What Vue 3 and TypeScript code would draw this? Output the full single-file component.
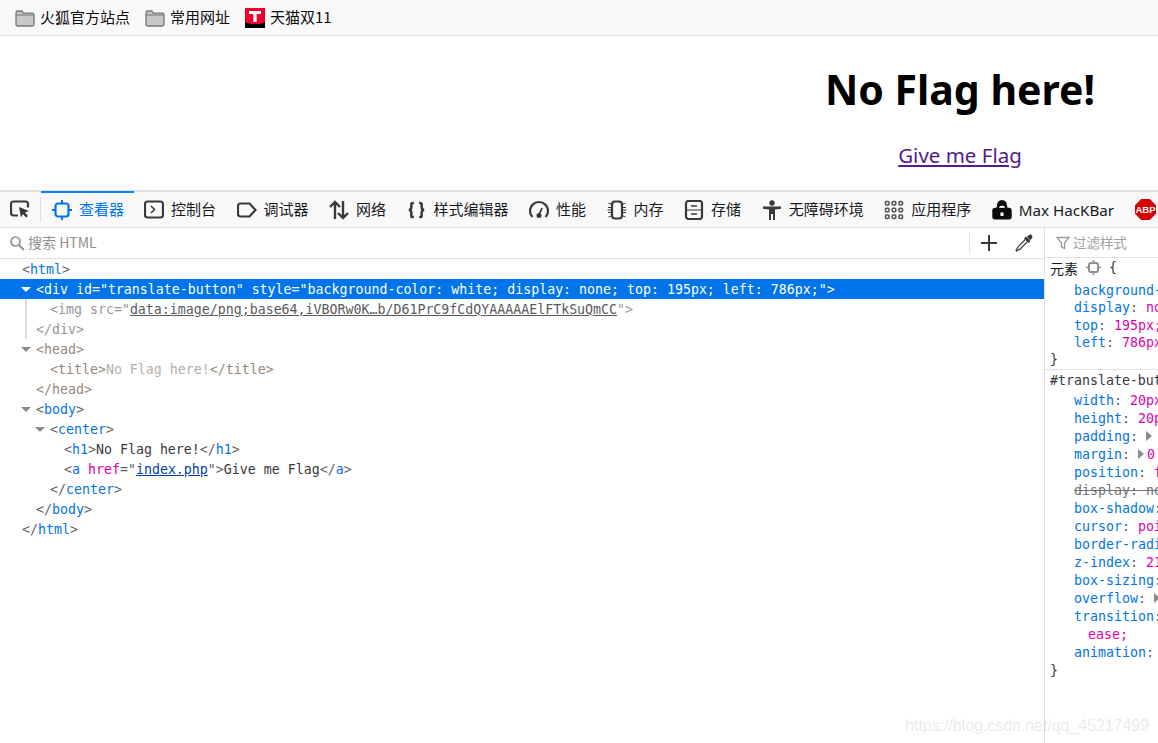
<script setup lang="ts">
type Seg = { t: string; c?: string };
type Row = { level: number; twisty?: boolean; selected?: boolean; guide?: boolean; dim?: boolean; segs: Seg[] };

const b = (t: string): Seg => ({ t, c: 'br' });
const n = (t: string): Seg => ({ t, c: 'tag' });

const rows: Row[] = [
  { level: 0, segs: [b('<'), n('html'), b('>')] },
  { level: 1, twisty: true, selected: true, segs: [{ t: '<div id="translate-button" style="background-color: white; display: none; top: 195px; left: 786px;">' }] },
  { level: 2, guide: true, dim: true, segs: [{ t: '<img src="' }, { t: 'data:image/png;base64,iVBORw0K…b/D61PrC9fCdQYAAAAAElFTkSuQmCC', c: 'link-dim' }, { t: '">' }] },
  { level: 1, guide: true, dim: true, segs: [{ t: '</div>' }] },
  { level: 1, twisty: true, dim: true, segs: [{ t: '<head>', c: 'brown' }] },
  { level: 2, dim: true, segs: [{ t: '<title>', c: 'brown' }, { t: 'No Flag here!', c: 'pale' }, { t: '</title>', c: 'brown' }] },
  { level: 1, dim: true, segs: [{ t: '</head>', c: 'brown' }] },
  { level: 1, twisty: true, segs: [b('<'), n('body'), b('>')] },
  { level: 2, twisty: true, segs: [b('<'), n('center'), b('>')] },
  { level: 3, segs: [b('<'), n('h1'), b('>'), { t: 'No Flag here!' }, b('</'), n('h1'), b('>')] },
  { level: 3, segs: [b('<'), n('a'), { t: ' ' }, { t: 'href', c: 'attr' }, b('="'), { t: 'index.php', c: 'link' }, b('">'), { t: 'Give me Flag' }, b('</'), n('a'), b('>')] },
  { level: 2, segs: [b('</'), n('center'), b('>')] },
  { level: 1, segs: [b('</'), n('body'), b('>')] },
  { level: 0, segs: [b('</'), n('html'), b('>')] },
];

const rule1 = [
  { k: 'background-color', v: 'white;' },
  { k: 'display', v: 'none;' },
  { k: 'top', v: '195px;' },
  { k: 'left', v: '786px;' },
];

type Decl = { k: string; v?: string; arrow?: boolean; off?: boolean; cont?: boolean };
const rule2: Decl[] = [
  { k: 'width', v: '20px;' },
  { k: 'height', v: '20px;' },
  { k: 'padding', arrow: true },
  { k: 'margin', arrow: true, v: '0' },
  { k: 'position', v: 'fixed;' },
  { k: 'display', v: 'none;', off: true },
  { k: 'box-shadow', v: '0;' },
  { k: 'cursor', v: 'pointer;' },
  { k: 'border-radius', v: '0;' },
  { k: 'z-index', v: '2147483647;' },
  { k: 'box-sizing', v: 'border-box;' },
  { k: 'overflow', arrow: true },
  { k: 'transition', v: 'all 0.3s' },
  { k: '', v: 'ease;', cont: true },
  { k: 'animation', v: 'none;' },
];
</script>

<template>
  <div class="window">
    <nav class="bookmarks">
      <a class="bm">
        <svg width="20" height="20" viewBox="0 0 20 20"><path d="M1 5.500C1 4 1.600 3 2.600 3h4.200l1.600 2.200h8.800c1 0 1.800.8 1.800 1.800v9.200c0 1-.8 1.800-1.800 1.800H2.800c-1 0-1.800-.8-1.800-1.800z" fill="#c8c8c8" stroke="#757575" stroke-width="1.300"/><path d="M1.500 7h17" stroke="#757575" stroke-width="1"/></svg>
        <span>火狐官方站点</span>
      </a>
      <a class="bm">
        <svg width="20" height="20" viewBox="0 0 20 20"><path d="M1 5.500C1 4 1.600 3 2.600 3h4.200l1.600 2.200h8.800c1 0 1.800.8 1.800 1.800v9.200c0 1-.8 1.800-1.800 1.800H2.800c-1 0-1.800-.8-1.800-1.800z" fill="#c8c8c8" stroke="#757575" stroke-width="1.300"/><path d="M1.500 7h17" stroke="#757575" stroke-width="1"/></svg>
        <span>常用网址</span>
      </a>
      <a class="bm">
        <svg width="20" height="20" viewBox="0 0 20 20"><rect width="20" height="20" fill="#000"/><path d="M0 0h20v14c-3 1.500-5 2-10 2s-7-.5-10-2z" fill="#f0002a"/><path d="M4 3h12v3h-4.300v8h-3.400v-8H4z" fill="#fff"/></svg>
        <span>天猫双11</span>
      </a>
    </nav>

    <main class="page">
      <h1>No Flag here!</h1>
      <a class="give">Give me Flag</a>
    </main>

    <section class="devtools">
      <header class="toolbar">
        <button class="pick">
          <svg width="20" height="20" viewBox="0 0 20 20" fill="none"><path d="M8 16.500H3.500C2.100 16.500 1 15.400 1 14V5C1 3.600 2.100 2.500 3.500 2.500h12C16.900 2.500 18 3.600 18 5V8.500" stroke="#38383d" stroke-width="2.200"/><path d="M9 8l10 4-4 1.500 3 3.500-2 1.500-3-3.500-2 3.500z" fill="#38383d"/></svg>
        </button>
        <div class="tab active">
          <svg width="20" height="20" viewBox="0 0 20 20" fill="none"><rect x="3.500" y="3.500" width="13" height="13" rx="2.500" stroke="#0074e8" stroke-width="2.200"/><path d="M10 0v3M10 17v3M0 10h3M17 10h3" stroke="#0074e8" stroke-width="2"/></svg>
          <span>查看器</span>
        </div>
        <div class="tab">
          <svg width="20" height="20" viewBox="0 0 20 20" fill="none"><rect x="1" y="1.500" width="18" height="16" rx="2.500" stroke="#38383d" stroke-width="2.200"/><path d="M7 6l3.500 3.500L7 13" stroke="#38383d" stroke-width="1.500"/></svg>
          <span>控制台</span>
        </div>
        <div class="tab">
          <svg width="20" height="20" viewBox="0 0 20 20" fill="none"><path d="M3.500 3.500h9l6 6.500-6 6.500h-9C2.100 16.500 1 15.400 1 14V6c0-1.400 1.100-2.500 2.500-2.500z" stroke="#38383d" stroke-width="2.200"/></svg>
          <span>调试器</span>
        </div>
        <div class="tab">
          <svg width="20" height="20" viewBox="0 0 20 20" fill="none"><path d="M6 19V2M1 7l5-5 5 5M14 1v17M9 13l5 5 5-5" stroke="#38383d" stroke-width="2.400"/></svg>
          <span>网络</span>
        </div>
        <div class="tab">
          <svg width="20" height="20" viewBox="0 0 20 20" fill="none"><path d="M6.800 3H6C5 3 4.300 3.500 4.300 4.600v3.200c0 1.100-.7 1.900-2.300 2.200 1.600.3 2.300 1.100 2.300 2.200v3.200c0 1.100.7 1.600 1.700 1.600h.8M12.200 3H13c1 0 1.700.5 1.700 1.600v3.200c0 1.100.7 1.900 2.300 2.200-1.600.3-2.300 1.100-2.300 2.200v3.200c0 1.100-.7 1.600-1.700 1.600h-.8" stroke="#38383d" stroke-width="2.500"/></svg>
          <span>样式编辑器</span>
        </div>
        <div class="tab">
          <svg width="20" height="20" viewBox="0 0 20 20" fill="none"><path d="M3.500 17C1.800 15.300 1 13.200 1 11a9 9 0 0 1 18 0c0 2.200-.8 4.300-2.500 6" stroke="#38383d" stroke-width="2.200"/><circle cx="10" cy="15.500" r="2.500" fill="#38383d"/><path d="M10 15l3-7" stroke="#38383d" stroke-width="1.800"/></svg>
          <span>性能</span>
        </div>
        <div class="tab">
          <svg width="20" height="20" viewBox="0 0 20 20" fill="none"><rect x="5" y="1.500" width="10" height="17" rx="3" stroke="#38383d" stroke-width="2.200"/><path d="M5 4.500L1.500 3M5 7.500H1M5 10H0.500M5 12.500H1M5 15.500L1.500 17M15 4.500L18.500 3M15 7.500h4M15 10h4.500M15 12.500h4M15 15.500L18.500 17" stroke="#38383d" stroke-width="1"/></svg>
          <span>内存</span>
        </div>
        <div class="tab">
          <svg width="20" height="20" viewBox="0 0 20 20" fill="none"><rect x="2" y="1" width="16" height="18" rx="2.500" stroke="#38383d" stroke-width="2.200"/><path d="M2 10h16" stroke="#38383d" stroke-width="1"/><path d="M7 6h6M7 14h6" stroke="#38383d" stroke-width="1.600"/></svg>
          <span>存储</span>
        </div>
        <div class="tab">
          <svg width="20" height="20" viewBox="0 0 20 20" fill="none"><circle cx="10" cy="3" r="2.700" fill="#38383d"/><path d="M1 6.500h18v2.300l-6 .7V20h-2v-6H9v6H7V9.500l-6-.7z" fill="#38383d"/></svg>
          <span>无障碍环境</span>
        </div>
        <div class="tab">
          <svg width="20" height="20" viewBox="0 0 20 20" fill="none" stroke="#555" stroke-width="1.600"><rect x="1.500" y="1.500" width="3.500" height="3.500" rx="1"/><rect x="8.250" y="1.500" width="3.500" height="3.500" rx="1"/><rect x="15" y="1.500" width="3.500" height="3.500" rx="1"/><rect x="1.500" y="8.250" width="3.500" height="3.500" rx="1"/><rect x="8.250" y="8.250" width="3.500" height="3.500" rx="1"/><rect x="15" y="8.250" width="3.500" height="3.500" rx="1"/><rect x="1.500" y="15" width="3.500" height="3.500" rx="1"/><rect x="8.250" y="15" width="3.500" height="3.500" rx="1"/><rect x="15" y="15" width="3.500" height="3.500" rx="1"/></svg>
          <span>应用程序</span>
        </div>
        <div class="tab">
          <svg width="20" height="20" viewBox="0 0 20 20"><path d="M10 0c3 0 4.800 2.200 5 5l.3 2.500 2.700.5c1 .2 1.700 1 1.700 2.200v6.800c0 1.400-1 2.500-2.400 2.500H2.700C1.300 19.500.3 18.400.3 17v-6.800c0-1.200.7-2 1.700-2.200l2.700-.5L5 5c.2-2.800 2-5 5-5z" fill="#0c0c0d"/><path d="M6.800 7.500c.4-1.200 1.600-1.800 3.200-1.800s2.800.6 3.200 1.800c-2 .5-4.400.5-6.400 0z" fill="#fff"/><rect x="8.500" y="12.500" width="3" height="3.500" fill="#fff"/></svg>
          <span class="latin">Max HacKBar</span>
        </div>
        <div class="tab abp">
          <svg width="21" height="21" viewBox="0 0 21 21"><path d="M6.200 0h8.600L21 6.200v8.600L14.800 21H6.200L0 14.800V6.200z" fill="#d80000"/><text x="10.500" y="14" text-anchor="middle" font-family="Liberation Sans, sans-serif" font-weight="700" font-size="9.500" fill="#fff">ABP</text></svg>
        </div>
      </header>

      <div class="panes">
        <div class="markup">
          <div class="search">
            <svg width="16" height="16" viewBox="0 0 16 16" fill="none"><circle cx="6.500" cy="6.500" r="4.500" stroke="#8f8f8f" stroke-width="1.700"/><path d="M10 10l5 5" stroke="#8f8f8f" stroke-width="2"/></svg>
            <span class="ph">搜索 HTML</span>
            <span class="sp"></span>
            <span class="sep"></span>
            <svg class="plus" width="16" height="16" viewBox="0 0 16 16"><path d="M8 0v16M0 8h16" stroke="#38383d" stroke-width="2"/></svg>
            <svg class="drop" width="18" height="18" viewBox="0 0 18 18" fill="none"><path d="M10 3.500l4.500 4.500" stroke="#38383d" stroke-width="2.600"/><path d="M12 3c1.200-1.300 1.900-2.400 3.300-2.400 1.200 0 2.100 1 2.100 2.100C17.400 4.100 16.300 5 15 6.300z" fill="#38383d"/><path d="M10.800 5L3 12.800c-.5.500-.6 1-.7 1.500L1 16.400l.6.600 2.100-1.300c.5-.1 1-.2 1.500-.7L13 7.200" stroke="#38383d" stroke-width="1.200"/></svg>
          </div>
          <div class="tree">
            <div
              v-for="(r, i) in rows"
              :key="i"
              class="row"
              :class="{ selected: r.selected, guide: r.guide, dim: r.dim }"
              :style="{ paddingLeft: 22 + r.level * 14 + 'px' }"
            >
              <i v-if="r.twisty" class="twisty"></i>
              <span v-for="(s, j) in r.segs" :key="j" :class="s.c">{{ s.t }}</span>
            </div>
          </div>
        </div>

        <aside class="rules">
          <div class="filter">
            <svg width="14" height="14" viewBox="0 0 14 14" fill="none"><path d="M1 1.500h12L8.500 7v5.500l-3-1.500V7z" stroke="#999" stroke-width="1.300"/></svg>
            <span>过滤样式</span>
          </div>
          <div class="rule first">
            <div class="sel"><span class="cjk">元素</span><svg width="15" height="15" viewBox="0 0 15 15" fill="none"><rect x="3" y="3" width="9" height="9" rx="2" stroke="#8f8f8f" stroke-width="2"/><path d="M7.500 0v3M7.500 12v3M0 7.500h3M12 7.500h3" stroke="#8f8f8f" stroke-width="1.600"/></svg><span class="brace">{</span></div>
            <div v-for="d in rule1" :key="d.k" class="decl"><span class="k">{{ d.k }}</span><span class="br">: </span><span class="v">{{ d.v }}</span></div>
            <div class="close">}</div>
          </div>
          <div class="rule second">
            <div class="sel mono">#translate-button {</div>
            <div v-for="(d, i) in rule2" :key="i" class="decl" :class="{ off: d.off, cont: d.cont }">
              <span class="k">{{ d.k }}</span><span v-if="d.k" class="br">: </span><i v-if="d.arrow" class="arrow"></i><span class="v">{{ d.v }}</span>
            </div>
            <div class="close">}</div>
          </div>
        </aside>
      </div>
    </section>

    <div class="mark">https://blog.csdn.net/qq_45217499</div>
  </div>
</template>

<style scoped>
.window {
  position: relative;
  width: 1158px;
  height: 743px;
  overflow: hidden;
  display: flex;
  flex-direction: column;
  background: #fff;
  font-family: "Noto Sans", "Noto Sans CJK SC", sans-serif;
  color: #0c0c0d;
}
.bookmarks {
  height: 35px;
  flex: none;
  display: flex;
  align-items: center;
  gap: 15px;
  padding: 0 15px;
  background: #f9f9fa;
  border-bottom: 1px solid #e1e1e2;
}
.bm {
  display: flex;
  align-items: center;
  gap: 5px;
  font-size: 15px;
  line-height: 20px;
  font-family: "Noto Sans CJK SC", sans-serif;
}
.bm span { white-space: nowrap; padding-bottom: 2px; }
.page {
  height: 154px;
  flex: none;
  box-sizing: border-box;
  padding: 26px 0 0 762px;
  width: 1158px;
  text-align: center;
  white-space: nowrap;
}
.page h1 {
  margin: 0;
  width: 396px;
  font-size: 41px;
  line-height: 54px;
  font-weight: 700;
  font-family: "Noto Sans", sans-serif;
  color: #000;
}
.give {
  display: block;
  width: 396px;
  margin-top: 26px;
  font-size: 20.500px;
  line-height: 27px;
  color: #551a8b;
  text-decoration: underline;
}
.devtools {
  flex: 1;
  min-height: 0;
  display: flex;
  flex-direction: column;
  border-top: 2px solid #e0e0e2;
}
.toolbar {
  height: 35px;
  flex: none;
  display: flex;
  align-items: stretch;
  background: #f9f9fa;
  border-bottom: 1px solid #e0e0e2;
}
.pick {
  width: 41px;
  flex: none;
  box-sizing: border-box;
  padding: 0 0 1px 10px;
  margin: 0;
  background: none;
  border: 0;
  display: flex;
  align-items: center;
  position: relative;
}
.pick::after {
  content: "";
  position: absolute;
  right: 0;
  top: 5px;
  bottom: 5px;
  width: 1px;
  background: #e0e0e2;
}
.tab {
  display: flex;
  align-items: center;
  gap: 7px;
  padding: 0 10.500px 1px 10px;
  font-size: 15px;
  color: #18191a;
  white-space: nowrap;
  border-top: 2px solid transparent;
  margin-top: -1px;
  font-family: "Noto Sans CJK SC", sans-serif;
}
.tab span { padding-bottom: 2px; }
.tab svg { flex: none; }
.tab.active {
  color: #0074e8;
  border-top-color: #0a84ff;
  padding-left: 11px;
  padding-right: 10px;
}
.tab .latin { font-family: "Noto Sans", sans-serif; font-size: 15.200px; padding-bottom: 0; }
.tab.abp { padding-left: 10px; }
.panes {
  flex: 1;
  min-height: 0;
  display: flex;
}
.markup {
  width: 1044px;
  flex: none;
  display: flex;
  flex-direction: column;
}
.search {
  height: 30px;
  flex: none;
  display: flex;
  align-items: center;
  padding-left: 9px;
  border-bottom: 1px solid #e0e0e2;
  background: #fff;
}
.ph {
  margin-left: 3px;
  padding-bottom: 3px;
  font-size: 14px;
  color: #8f8f8f;
  font-family: "Noto Sans CJK SC", sans-serif;
}
.sp { flex: 1; }
.sep {
  width: 1px;
  height: 20px;
  background: #e0e0e2;
}
.plus { margin-left: 11px; }
.drop { margin: 0 11px 0 18px; }
.tree {
  font-family: "DejaVu Sans Mono", monospace;
  font-size: 13.280px;
  line-height: 22px;
  color: #38383d;
}
.row {
  position: relative;
  height: 20px;
  white-space: pre;
}
.row.guide::before {
  content: "";
  position: absolute;
  left: 25px;
  top: 0;
  bottom: 0;
  width: 2px;
  background: #dcdcdc;
}
.row.selected {
  background: #0074e8;
  color: #fff;
}
.row.dim { color: #96969a; }
.twisty {
  position: absolute;
  margin-left: -15px;
  top: 8px;
  width: 0;
  height: 0;
  border-left: 5px solid transparent;
  border-right: 5px solid transparent;
  border-top: 5px solid #8a8a8a;
}
.selected .twisty { border-top-color: #fff; }
.br { color: #5f5f64; }
.tag { color: #0074e8; }
.attr { color: #dd00a9; }
.link { color: #003eaa; text-decoration: underline; }
.link-dim { color: #5a5a5e; text-decoration: underline; }
.brown { color: #94887a; }
.pale { color: #b4afa6; }
.rules {
  flex: 1;
  min-width: 0;
  overflow: hidden;
  border-left: 1px solid #e0e0e2;
  font-family: "DejaVu Sans Mono", monospace;
  font-size: 13.280px;
  color: #38383d;
  white-space: nowrap;
}
.filter {
  height: 30px;
  box-sizing: border-box;
  display: flex;
  align-items: center;
  gap: 3px;
  padding-left: 11px;
  border-bottom: 1px solid #e0e0e2;
  font: 13.500px "Noto Sans CJK SC", sans-serif;
  color: #a0a0a0;
}
.filter span { padding-bottom: 1px; }
.rule { padding-left: 5px; }
.rule.first {
  height: 112px;
  box-sizing: border-box;
  border-bottom: 1px solid #e0e0e2;
}
.rule.first .sel {
  display: flex;
  align-items: center;
  gap: 8px;
  height: 19px;
  margin-bottom: 5px;
}
.cjk { font: 14px "Noto Sans CJK SC", sans-serif; color: #18191a; }
.rule.first .decl { height: 17.250px; line-height: 17.250px; }
.rule.first .close { height: 17.250px; line-height: 17.250px; }
.rule.second { padding-top: 1px; }
.rule.second .sel { height: 21px; line-height: 19px; }
.rule.second .decl { height: 18px; line-height: 18px; }
.rule.second .close { height: 18px; line-height: 18px; }
.decl { padding-left: 24px; }
.decl.cont { padding-left: 38px; }
.k { color: #0074e8; }
.v { color: #dd00a9; }
.decl.off, .decl.off .k, .decl.off .v, .decl.off .br {
  color: #737373;
  text-decoration: line-through;
}
.arrow {
  display: inline-block;
  width: 0;
  height: 0;
  border-top: 5px solid transparent;
  border-bottom: 5px solid transparent;
  border-left: 6px solid #8a8a8a;
  margin-right: 3px;
}
.mark {
  position: absolute;
  right: 9px;
  bottom: 8px;
  font: 15.900px "Liberation Sans", sans-serif;
  color: rgba(190, 190, 190, 0.32);
  pointer-events: none;
  white-space: nowrap;
}
</style>
